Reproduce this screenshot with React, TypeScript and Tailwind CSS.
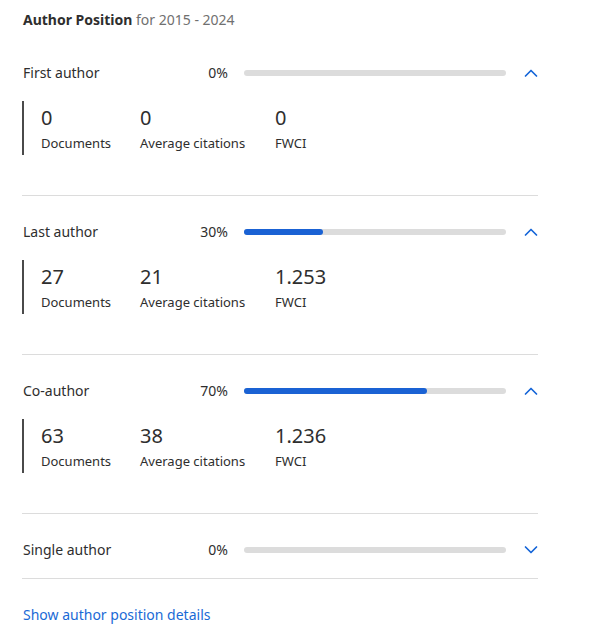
const sections = [
  { label: "First author", pct: 0, open: true, stats: ["0", "0", "0"] },
  { label: "Last author", pct: 30, open: true, stats: ["27", "21", "1.253"] },
  { label: "Co-author", pct: 70, open: true, stats: ["63", "38", "1.236"] },
  { label: "Single author", pct: 0, open: false, stats: [] as string[] },
];

const Chevron = ({ up }: { up: boolean }) => (
  <svg width="14" height="14" viewBox="0 0 14 14" fill="none" className="ml-[18px] shrink-0">
    <polyline
      points={up ? "1.5,10 7,4.5 12.5,10" : "1.5,4 7,9.5 12.5,4"}
      stroke="#1565d8"
      strokeWidth="1.7"
      strokeLinecap="round"
      strokeLinejoin="round"
    />
  </svg>
);

const App = () => {
  return (
    <div className="min-h-[631px] w-[598px] bg-white px-[22px] pt-[10px] font-['Noto_Sans',sans-serif] text-[#2e2e2e]">
      <p className="pl-px text-sm leading-5">
        <span className="font-bold">Author Position</span>{" "}
        <span className="text-[#707070]">for 2015 - 2024</span>
      </p>
      <div className="mt-[33px] w-[516px]">
        {sections.map((s, i) => (
          <div key={s.label} className={i > 0 ? "pt-[26px]" : ""}>
            <div className="flex h-5 items-center">
              <span className="w-[150px] pl-px text-sm leading-5">{s.label}</span>
              <span className="w-[56px] text-right text-sm leading-5">{s.pct}%</span>
              <div className="ml-4 h-[6px] w-[262px] rounded-full bg-[#dcdcdc]">
                <div className="h-full rounded-full bg-[#1a62d4]" style={{ width: `${s.pct}%` }} />
              </div>
              <Chevron up={s.open} />
            </div>
            {s.open ? (
              <div className="mt-[18px] mb-[40px] flex border-l-2 border-[#4a4a4a] py-[3px] pl-[17px]">
                {["Documents", "Average citations", "FWCI"].map((name, j) => (
                  <div key={name} className={j === 0 ? "w-[99px]" : j === 1 ? "w-[135px]" : ""}>
                    <p className="text-[20px] leading-7">{s.stats[j]}</p>
                    <p className="mt-[2px] text-[13px] leading-[18px]">{name}</p>
                  </div>
                ))}
              </div>
            ) : (
              <div className="h-[18px]" />
            )}
            <div className="h-px bg-[#dcdcdc]" />
          </div>
        ))}
      </div>
      <a href="#" className="mt-[26px] block pl-px text-sm leading-5 text-[#1a6ad6]">
        Show author position details
      </a>
    </div>
  );
};

export default App;
